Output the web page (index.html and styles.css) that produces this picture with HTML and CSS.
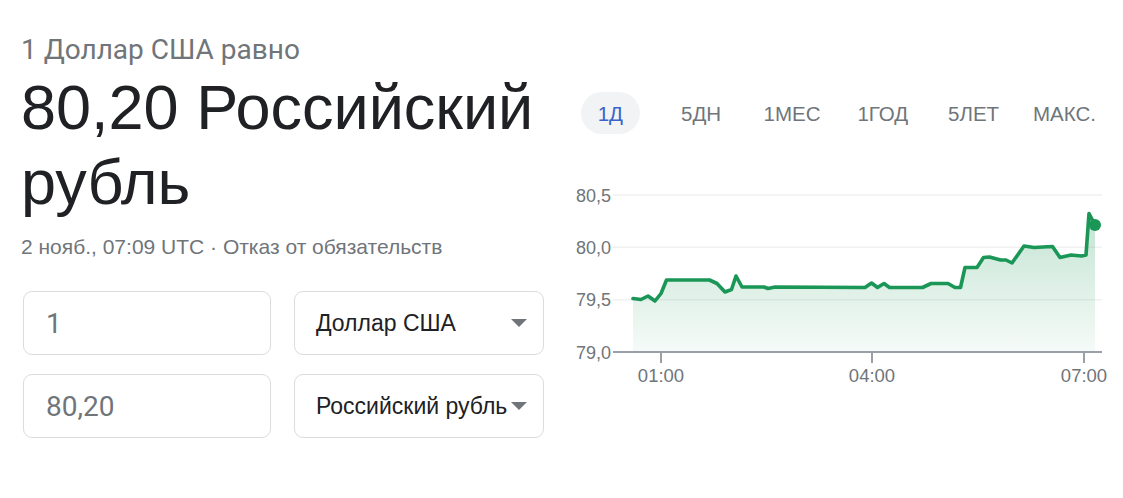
FILE: index.html
```html
<!DOCTYPE html>
<html lang="ru">
<head>
<meta charset="utf-8">
<title>Конвертер валют</title>
<link rel="stylesheet" href="styles.css">
</head>
<body>
<div class="page">
  <div class="left">
    <div class="subtitle">1 Доллар США равно</div>
    <div class="big">80,20 Российский рубль</div>
    <div class="date">2 нояб., 07:09 UTC · <span class="disc">Отказ от обязательств</span></div>
    <div class="converter">
      <div class="field"><span class="num">1</span></div>
      <div class="field select"><span class="cur">Доллар США</span><span class="arrow"></span></div>
      <div class="field"><span class="num">80,20</span></div>
      <div class="field select"><span class="cur">Российский рубль</span><span class="arrow"></span></div>
    </div>
  </div>
  <div class="right">
    <div class="tabs">
      <div class="tab active"><span>1Д</span></div>
      <div class="tab"><span>5ДН</span></div>
      <div class="tab"><span>1МЕС</span></div>
      <div class="tab"><span>1ГОД</span></div>
      <div class="tab"><span>5ЛЕТ</span></div>
      <div class="tab"><span>МАКС.</span></div>
    </div>
    <svg class="chart" width="545" height="215" viewBox="0 0 545 215">
      <defs>
        <linearGradient id="fillg" x1="0" y1="0" x2="0" y2="1">
          <stop offset="0" stop-color="#1a9656" stop-opacity="0.26"/>
          <stop offset="1" stop-color="#1a9656" stop-opacity="0.04"/>
        </linearGradient>
      </defs>
      <g class="grid">
        <line x1="48" y1="20" x2="537" y2="20"/>
        <line x1="48" y1="72.3" x2="537" y2="72.3"/>
        <line x1="48" y1="124.7" x2="537" y2="124.7"/>
      </g>
      <polygon class="area" points="68,123.5 76,124.5 83,121 90,126 96,118.5 101.5,105 144.5,105 152,108.5 160,117 166.5,114.5 171,101 177,112 199,112 203,113.5 210,112 300,112.5 306.5,108 312.5,112.5 319,108.5 324.5,112.5 357.5,112.5 366,108.5 383,108.5 390,112.5 395.5,112.5 400,92.5 412,92.5 418.5,82.5 424.5,82 435.5,85 441,85 447,88 459,71 469,72.5 487.5,71.5 495,82.5 506,80 516.5,81 521,80 524,38.5 530,50 530,177 68,177"/>
      <polyline class="line" points="68,123.5 76,124.5 83,121 90,126 96,118.5 101.5,105 144.5,105 152,108.5 160,117 166.5,114.5 171,101 177,112 199,112 203,113.5 210,112 300,112.5 306.5,108 312.5,112.5 319,108.5 324.5,112.5 357.5,112.5 366,108.5 383,108.5 390,112.5 395.5,112.5 400,92.5 412,92.5 418.5,82.5 424.5,82 435.5,85 441,85 447,88 459,71 469,72.5 487.5,71.5 495,82.5 506,80 516.5,81 521,80 524,38.5 530,50"/>
      <circle class="dot" cx="530" cy="50" r="6"/>
      <g class="axis">
        <line x1="48" y1="177" x2="537" y2="177"/>
        <line x1="96" y1="177" x2="96" y2="188"/>
        <line x1="307" y1="177" x2="307" y2="188"/>
        <line x1="519" y1="177" x2="519" y2="188"/>
      </g>
      <g class="ylab">
        <text x="46" y="26.5">80,5</text>
        <text x="46" y="79">80,0</text>
        <text x="46" y="131.3">79,5</text>
        <text x="46" y="183.8">79,0</text>
      </g>
      <g class="xlab">
        <text x="96" y="206.7">01:00</text>
        <text x="307" y="206.7">04:00</text>
        <text x="519" y="206.7">07:00</text>
      </g>
    </svg>
  </div>
</div>
</body>
</html>
```

FILE: styles.css
```css
html, body {
  margin: 0;
  padding: 0;
  background: #ffffff;
}

body {
  font-family: "Liberation Sans", Arial, sans-serif;
  color: #202124;
}

.page {
  display: flex;
  align-items: flex-start;
  padding-left: 21px;
}

.left {
  width: 524px;
  display: flex;
  flex-direction: column;
}

.subtitle {
  margin-top: 33px;
  font-family: Roboto, "Liberation Sans", sans-serif;
  font-size: 28px;
  line-height: 33px;
  color: #70757a;
}

.big {
  margin-top: 4px;
  font-size: 63px;
  line-height: 75px;
  color: #202124;
}

.date {
  margin-top: 15px;
  font-size: 21px;
  line-height: 24px;
  color: #70757a;
  white-space: nowrap;
}

.converter {
  margin-top: 32px;
  margin-left: 2px;
  display: grid;
  grid-template-columns: 248px 250px;
  column-gap: 23px;
  row-gap: 19px;
}

.field {
  height: 62px;
  border: 1px solid #dadce0;
  border-radius: 9px;
  display: flex;
  align-items: center;
  padding-left: 22px;
}

.num {
  font-family: Roboto, "Liberation Sans", sans-serif;
  font-size: 28px;
  color: #70757a;
}

.select {
  justify-content: space-between;
  padding-left: 21px;
  padding-right: 16px;
}

.cur {
  font-size: 23px;
  color: #202124;
  white-space: nowrap;
}

.arrow {
  width: 0;
  height: 0;
  border-left: 8px solid transparent;
  border-right: 8px solid transparent;
  border-top: 8px solid #70757a;
  flex-shrink: 0;
}

.right {
  margin-left: 20px;
  width: 545px;
  display: flex;
  flex-direction: column;
}

.tabs {
  margin-top: 92px;
  display: flex;
}

.tab {
  width: 91px;
  display: flex;
  justify-content: center;
}

.tab span {
  height: 42px;
  line-height: 44px;
  padding: 0 17px;
  border-radius: 21px;
  font-size: 20.5px;
  color: #70757a;
  white-space: nowrap;
}

.tab.active span {
  background: #f1f3f4;
  color: #3b63c9;
}

.chart {
  display: block;
  margin-top: 41px;
}

.grid line {
  stroke: #f1f1f1;
  stroke-width: 1.5;
}

.area {
  fill: url(#fillg);
}

.line {
  fill: none;
  stroke: #1a9656;
  stroke-width: 3.6;
  stroke-linejoin: round;
  stroke-linecap: round;
}

.dot {
  fill: #1a9656;
}

.axis line {
  stroke: #9aa0a6;
  stroke-width: 2;
}

.ylab text {
  font-family: "Liberation Sans", Arial, sans-serif;
  font-size: 18px;
  fill: #70757a;
  text-anchor: end;
}

.xlab text {
  font-family: "Liberation Sans", Arial, sans-serif;
  font-size: 18.5px;
  fill: #70757a;
  text-anchor: middle;
}
```
